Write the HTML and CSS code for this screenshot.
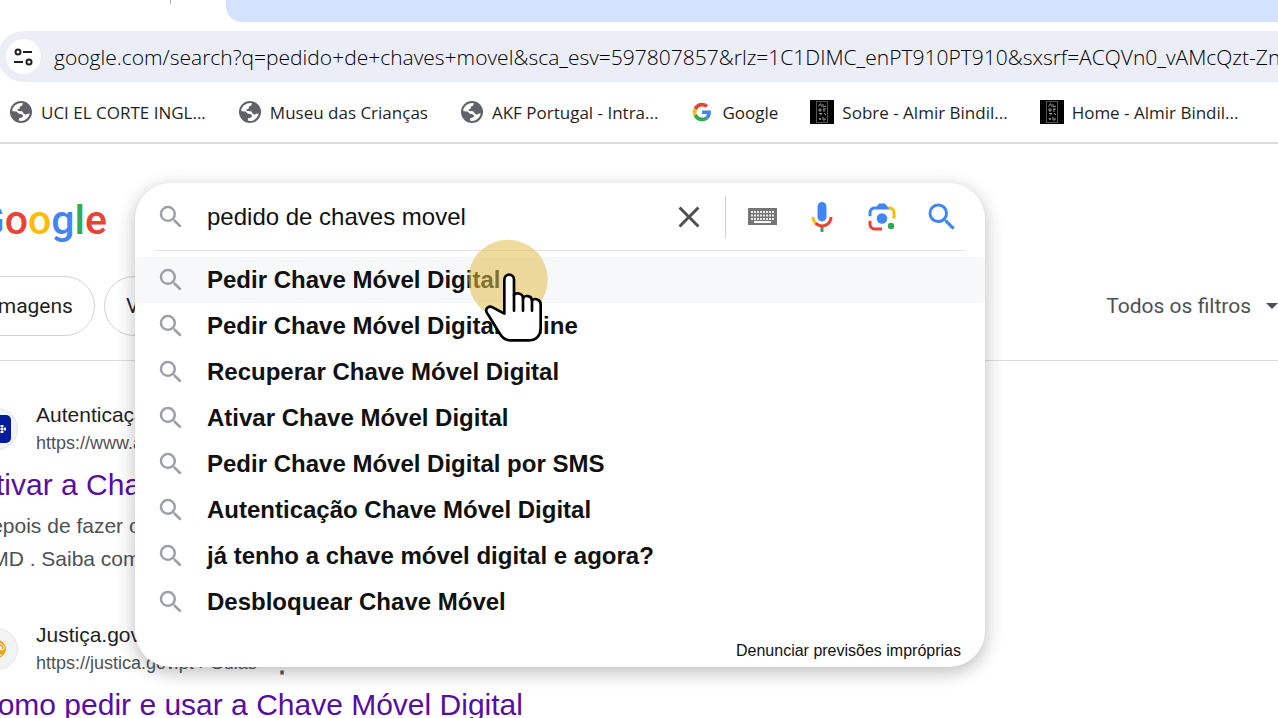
FILE: index.html
```html
<!DOCTYPE html>
<html lang="pt">
<head>
  <meta charset="UTF-8">
  <meta name="viewport" content="width=device-width, initial-scale=1.0">
  <title>pedido de chaves movel - Pesquisa Google</title>
  <link rel="stylesheet" href="styles.css">
</head>
<body>
  <!-- Icons used more than once -->
  <svg class="sprite" aria-hidden="true">
    <symbol id="icon-search" viewBox="0 0 24 24">
      <path d="M15.5 14h-.79l-.28-.27A6.47 6.47 0 0 0 16 9.5 6.5 6.5 0 1 0 9.5 16c1.61 0 3.09-.59 4.23-1.57l.27.28v.79l5 4.99L20.49 19l-4.99-5zm-6 0C7.01 14 5 11.99 5 9.5S7.01 5 9.5 5 14 7.01 14 9.5 11.99 14 9.5 14z"/>
    </symbol>
    <symbol id="icon-globe" viewBox="0 0 24 24">
      <circle cx="12" cy="12" r="11" fill="#5f6368"/>
      <path fill="#fff" d="M3.200 9.800C4.300 6 7.800 3 12.500 3l1.500.3-.8 2.200-2.400 1.200v1.800l-2.300.9.400 1.600 4.300.2 1.500 2.200 1.800 1.300 1.700-.9 2.600-.3C19.600 17.700 16.300 21 11.800 21l-2-.4.300-2.400 3-.6 1.200-1.800-2-1.700-2.500-.3-2.300-2.200-3.900-.3z"/>
    </symbol>
    <symbol id="icon-almir" viewBox="0 0 24 24">
      <rect width="24" height="24" fill="#000"/>
      <rect x="6.500" y="1.500" width="11" height="21" fill="none" stroke="#555"/>
      <path fill="none" stroke="#999" d="M8.500 6.500l2-3 1 3M13 4v3l3-1M9 9h2v2H9zM13 9h3M14 9v3M9 13.500h3l-2 2M14 13l2 2M9 18l1 2 1-2M13 17v3h2v-2"/>
    </symbol>
  </svg>

  <header class="browser">
    <div class="tab-row">
      <div class="active-tab"></div>
      <div class="tab-strip"></div>
    </div>

    <div class="address-bar">
      <button class="site-info" type="button" aria-label="Ver informações do site">
        <svg viewBox="0 0 24 24" width="24" height="24" fill="none" stroke="#1f1f1f" stroke-width="2">
          <circle cx="6" cy="7" r="2.500"/>
          <path d="M11 7h9M2 17h9"/>
          <circle cx="17" cy="17" r="2.500"/>
        </svg>
      </button>
      <input class="address-input" type="text" aria-label="Barra de endereço" value="google.com/search?q=pedido+de+chaves+movel&amp;sca_esv=597807857&amp;rlz=1C1DIMC_enPT910PT910&amp;sxsrf=ACQVn0_vAMcQzt-Zn">
    </div>

    <nav class="bookmarks">
      <a class="bookmark" href="#"><svg><use href="#icon-globe"/></svg>UCI EL CORTE INGL...</a>
      <a class="bookmark" href="#"><svg><use href="#icon-globe"/></svg>Museu das Crianças</a>
      <a class="bookmark" href="#"><svg><use href="#icon-globe"/></svg>AKF Portugal - Intra...</a>
      <a class="bookmark" href="#">
        <svg viewBox="-7 -7 62 62">
          <path fill="#EA4335" d="M24 9.500c3.540 0 6.710 1.220 9.210 3.600l6.850-6.850C35.900 2.380 30.470 0 24 0 14.620 0 6.510 5.380 2.560 13.220l7.980 6.190C12.430 13.720 17.740 9.500 24 9.500z"/>
          <path fill="#4285F4" d="M46.980 24.550c0-1.570-.15-3.090-.38-4.550H24v9.020h12.940c-.58 2.960-2.260 5.480-4.780 7.180l7.730 6c4.510-4.180 7.090-10.360 7.090-17.650z"/>
          <path fill="#FBBC05" d="M10.530 28.590c-.48-1.450-.76-2.990-.76-4.590s.27-3.140.76-4.590l-7.980-6.190C.92 16.460 0 20.120 0 24c0 3.880.92 7.540 2.560 10.780l7.970-6.190z"/>
          <path fill="#34A853" d="M24 48c6.480 0 11.930-2.130 15.890-5.810l-7.730-6c-2.150 1.450-4.920 2.300-8.160 2.300-6.260 0-11.570-4.220-13.470-9.910l-7.980 6.190C6.510 42.620 14.620 48 24 48z"/>
        </svg>Google</a>
      <a class="bookmark" href="#"><svg><use href="#icon-almir"/></svg>Sobre - Almir Bindil...</a>
      <a class="bookmark" href="#"><svg><use href="#icon-almir"/></svg>Home - Almir Bindil...</a>
    </nav>
  </header>

  <div class="page">
    <div class="search-row">
      <a class="logo" href="#" aria-label="Google"><span class="blue">G</span><span class="red">o</span><span class="yellow">o</span><span class="blue">g</span><span class="green">l</span><span class="red">e</span></a>

      <form class="search-area" role="search">
        <div class="search-panel">
          <div class="search-box">
            <svg class="search-icon"><use href="#icon-search"/></svg>
            <input class="search-input" type="text" name="q" aria-label="Pesquisar" value="pedido de chaves movel">
            <button class="tool clear" type="button" aria-label="Limpar">
              <svg viewBox="0 0 24 24" width="36" height="36" fill="#4d5156"><path d="M19 6.410L17.590 5 12 10.590 6.410 5 5 6.410 10.590 12 5 17.590 6.410 19 12 13.410 17.590 19 19 17.590 13.410 12z"/></svg>
            </button>
            <button class="tool" type="button" aria-label="Ferramentas de introdução">
              <svg viewBox="0 0 29 17" width="29" height="17">
                <rect width="29" height="17" fill="#757575"/>
                <path stroke="#e8e8e8" stroke-width="2" stroke-dasharray="2 1" d="M3 4h23M3 7.500h23M3 11h23"/>
                <path stroke="#fff" stroke-width="2" d="M6 14h17"/>
              </svg>
            </button>
            <button class="tool" type="button" aria-label="Pesquisar por voz">
              <svg viewBox="0 0 24 24" width="36" height="36">
                <path fill="#4285f4" d="M12 15c1.660 0 3-1.310 3-2.970v-7.020c0-1.660-1.340-3.010-3-3.010s-3 1.340-3 3.010v7.020c0 1.660 1.340 2.970 3 2.970z"/>
                <path fill="#34a853" d="M11 18.080h2v3.920h-2z"/>
                <path fill="#fbbc04" d="M7.050 16.870c-1.270-1.330-2.050-2.830-2.050-4.870h2c0 1.450.56 2.420 1.470 3.380v.32l-1.150 1.180z"/>
                <path fill="#ea4335" d="M12 16.930a4.970 5.250 0 0 1-3.540-1.550l-1.410 1.490c1.260 1.340 3.020 2.130 4.950 2.130 3.870 0 6.990-2.920 6.990-7h-1.990c0 2.920-2.240 4.930-5 4.930z"/>
              </svg>
            </button>
            <button class="tool" type="button" aria-label="Pesquisar por imagem">
              <svg viewBox="0 0 192 192" width="36" height="36">
                <circle cx="144" cy="144" r="17" fill="#34a853"/>
                <circle cx="96" cy="104.150" r="28" fill="#4285f4"/>
                <path fill="#ea4335" d="M24 135.200c0 18.110 14.690 32.800 32.800 32.800H96v-16l-40.100-.1c-8.800 0-15.900-8.190-15.900-17.900v-18H24v19.200z"/>
                <path fill="#fbbc04" d="M168 72.800c0-18.110-14.690-32.800-32.800-32.800H116l20 16c8.800 0 16 8.290 16 18v30h16V72.800z"/>
                <path fill="#4285f4" d="M112 24H80L68 40H56.800C38.690 40 24 54.690 24 72.800V92h16V74c0-9.710 7.200-18 16-18h80l-24-32z"/>
              </svg>
            </button>
            <button class="tool submit" type="submit" aria-label="Pesquisa Google">
              <svg width="36" height="36" fill="#4285f4"><use href="#icon-search"/></svg>
            </button>
          </div>

          <ul class="suggestions">
            <li class="suggestion active"><svg class="search-icon"><use href="#icon-search"/></svg>Pedir Chave Móvel Digital</li>
            <li class="suggestion"><svg class="search-icon"><use href="#icon-search"/></svg>Pedir Chave Móvel Digital online</li>
            <li class="suggestion"><svg class="search-icon"><use href="#icon-search"/></svg>Recuperar Chave Móvel Digital</li>
            <li class="suggestion"><svg class="search-icon"><use href="#icon-search"/></svg>Ativar Chave Móvel Digital</li>
            <li class="suggestion"><svg class="search-icon"><use href="#icon-search"/></svg>Pedir Chave Móvel Digital por SMS</li>
            <li class="suggestion"><svg class="search-icon"><use href="#icon-search"/></svg>Autenticação Chave Móvel Digital</li>
            <li class="suggestion"><svg class="search-icon"><use href="#icon-search"/></svg>já tenho a chave móvel digital e agora?</li>
            <li class="suggestion"><svg class="search-icon"><use href="#icon-search"/></svg>Desbloquear Chave Móvel</li>
          </ul>
          <a class="report" href="#">Denunciar previsões impróprias</a>
        </div>
      </form>
    </div>

    <div class="filters">
      <a class="chip" href="#">Imagens</a>
      <a class="chip" href="#">Vídeos</a>
      <button class="all-filters" type="button">Todos os filtros <span class="caret"></span></button>
    </div>

    <main class="results">
      <article class="result">
        <div class="site">
          <span class="favicon">
            <svg viewBox="0 0 28 28" width="28" height="28">
              <rect width="28" height="28" rx="5" fill="#051c98"/>
              <path stroke="#fff" stroke-width="3" stroke-dasharray="2 1" d="M15 14h8M19 10v8M4 14h8M8 10v8"/>
            </svg>
          </span>
          <div>
            <div class="site-name">Autenticação.gov</div>
            <div class="site-url">https://www.autenticacao.gov.pt</div>
          </div>
        </div>
        <h3><a href="#">Ativar a Chave Móvel Digital</a></h3>
        <p>Depois de fazer o pedido da<br>CMD . Saiba como ativar</p>
      </article>

      <article class="result">
        <div class="site">
          <span class="favicon">
            <svg viewBox="0 0 18 18" width="18" height="18" fill="none" stroke="#fff">
              <circle cx="9" cy="9" r="9" fill="#e8a41c" stroke="none"/>
              <circle cx="11" cy="8" r="2"/>
              <path d="M13 6v3c0 2 3 1 3-1 0-6-10-6-10 0 0 3 3 5 6 4M9 15h5"/>
            </svg>
          </span>
          <div>
            <div class="site-name">Justiça.gov.pt</div>
            <div class="site-url">https://justica.gov.pt › Guias <button class="more" type="button" aria-label="Acerca deste resultado">⋮</button></div>
          </div>
        </div>
        <h3><a href="#">Como pedir e usar a Chave Móvel Digital</a></h3>
      </article>
    </main>
  </div>

  <!-- Mouse pointer with click highlight -->
  <svg class="pointer" viewBox="0 0 480 390" width="160" height="130" aria-hidden="true">
    <circle cx="204" cy="148" r="119" fill="rgba(225, 190, 75, .55)"/>
    <path fill="#fff" stroke="#000" stroke-width="8" stroke-linejoin="round" stroke-linecap="round" d="M193 251V149c0-20 29-20 29 0v47c4-9 26-8 27 8 6-10 26-7 27 7 8-8 26-3 26 12v71c0 22-13 37-34 37h-57c-13 0-21-6-28-15-14-19-26-44-42-67-8-13 6-23 17-17z"/>
    <path fill="none" stroke="#000" stroke-width="8" stroke-linecap="round" d="M222 196v46M249 204v38M276 211v31"/>
  </svg>
</body>
</html>
```
FILE: styles.css
```css
* {
  box-sizing: border-box;
}

body {
  margin: 0;
  height: 100vh;
  overflow: hidden;
  background: #fff;
  color: #1f1f1f;
  font-family: "Liberation Sans", Arial, sans-serif;
}

a {
  color: inherit;
  text-decoration: none;
}

button {
  padding: 0;
  border: none;
  background: none;
  color: inherit;
  font: inherit;
  cursor: pointer;
}

input {
  min-width: 0;
  padding: 0;
  border: none;
  outline: none;
  background: none;
  color: inherit;
  font: inherit;
}

.sprite {
  display: none;
}

/* Browser chrome */
.browser {
  border-bottom: 2px solid #dcdcde;
  font-family: "Open Sans", "Noto Sans", sans-serif;
}

.tab-row {
  display: flex;
  height: 22px;
}

.active-tab {
  width: 171px;
  height: 4px;
  margin-right: 55px;
  border-right: 1px solid #aaa;
}

.tab-strip {
  flex: 1;
  background: #d3e3fd;
  border-bottom-left-radius: 16px;
}

.address-bar {
  display: flex;
  align-items: center;
  gap: 13px;
  height: 51px;
  margin: 9px 0 0 -2px;
  padding-left: 8px;
  border-radius: 26px 0 0 26px;
  background: #ebeef7;
}

.site-info {
  display: flex;
  flex: none;
  align-items: center;
  justify-content: center;
  width: 35px;
  height: 35px;
  border-radius: 50%;
  background: #fff;
}

.address-input {
  flex: 1;
  color: #000;
  font-size: 21px;
  font-weight: 300;
}

.bookmarks {
  display: flex;
  align-items: center;
  gap: 32px;
  height: 60px;
  padding-left: 9px;
  overflow: hidden;
}

.bookmark {
  display: flex;
  flex: none;
  align-items: center;
  gap: 8px;
  font-size: 17px;
  white-space: nowrap;
}

.bookmark svg {
  width: 24px;
  height: 24px;
}

/* Search header */
.page {
  padding-top: 39px;
}

.search-row {
  display: flex;
  gap: 28px;
  height: 68px;
}

.logo {
  display: flex;
  justify-content: flex-end;
  width: 107px;
  overflow: hidden;
  font-family: Roboto, sans-serif;
  font-size: 41px;
  font-weight: 500;
  line-height: 74px;
}

.blue { color: #4285f4; }
.red { color: #ea4335; }
.yellow { color: #fbbc05; }
.green { color: #34a853; }

.search-area {
  position: relative;
  flex: 1;
  max-width: 850px;
}

.search-panel {
  position: absolute;
  top: 0;
  left: 0;
  right: 0;
  z-index: 1;
  border-radius: 36px;
  background: #fff;
  box-shadow: 0 5px 18px rgba(32, 33, 36, .3);
}

.search-box {
  display: flex;
  align-items: center;
  height: 68px;
  margin: 0 21px;
  border-bottom: 1px solid #dfe1e5;
}

.search-icon {
  flex: none;
  width: 30px;
  height: 30px;
  margin-right: 21px;
  fill: #9aa0a6;
}

.search-input {
  flex: 1;
  color: #111;
  font-size: 24px;
}

.tool {
  display: flex;
  flex: none;
  align-items: center;
  justify-content: center;
  width: 60px;
  height: 42px;
}

.clear {
  width: 73px;
  margin-right: 6px;
  border-right: 1px solid #d0d3d7;
}

.submit {
  margin-right: -8px;
}

.suggestions {
  margin: 0;
  padding: 6px 0 0;
  list-style: none;
}

.suggestion {
  display: flex;
  align-items: center;
  height: 46px;
  padding: 0 21px;
  color: #111;
  font-size: 24px;
  font-weight: bold;
}

.suggestion.active {
  border-radius: 4px;
  background: #f7f8fa;
}

.report {
  display: block;
  padding: 16px 24px 6px;
  color: #111;
  font-size: 16px;
  line-height: 20px;
  text-align: right;
}

/* Filter chips */
.filters {
  display: flex;
  gap: 9px;
  margin-top: 25px;
  padding-bottom: 24px;
  border-bottom: 1px solid #dadce0;
  font-family: Roboto, sans-serif;
  font-size: 21px;
}

.chip {
  height: 60px;
  padding: 0 21px;
  border: 1px solid #d0d3d7;
  border-radius: 30px;
  color: #1f1f1f;
  line-height: 58px;
}

.chip:first-child {
  margin-left: -30px;
}

.all-filters {
  display: flex;
  align-items: center;
  gap: 15px;
  margin-left: auto;
  color: #4d5156;
}

.caret {
  border: 6px solid transparent;
  border-top-color: #4d5156;
  border-bottom: none;
}

/* Results */
.results {
  margin-left: -24px;
  padding-top: 40px;
}

.result {
  margin-bottom: 46px;
}

.site {
  display: flex;
  align-items: center;
  gap: 18px;
  line-height: 28px;
}

.favicon {
  display: flex;
  align-items: center;
  justify-content: center;
  width: 42px;
  height: 42px;
  border: 1px solid #e4e6e9;
  border-radius: 50%;
  background: #f1f3f4;
}

.site-name {
  font-size: 21px;
}

.site-url {
  color: #4d5156;
  font-size: 18px;
}

.more {
  margin-left: 8px;
  font-size: 24px;
  font-weight: bold;
  line-height: 20px;
  vertical-align: middle;
}

.result h3 {
  margin: 10px 0 0;
  color: #560ea3;
  font-size: 30px;
  font-weight: normal;
  line-height: 36px;
}

.result p {
  margin: 6px 0 0;
  color: #4d5156;
  font-size: 21px;
  line-height: 33px;
}

.pointer {
  position: absolute;
  top: 230px;
  left: 440px;
  z-index: 2;
  pointer-events: none;
}
```
